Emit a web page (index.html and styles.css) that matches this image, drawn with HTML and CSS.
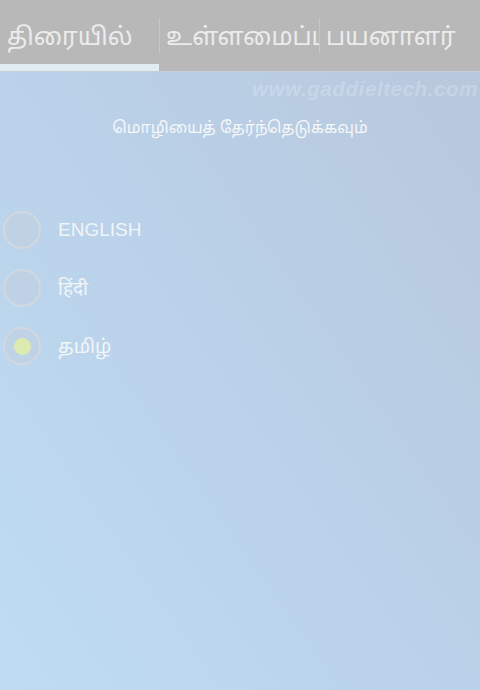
FILE: index.html
```html
<!DOCTYPE html>
<html lang="ta">
<head>
<meta charset="utf-8">
<title>மொழி</title>
<link rel="stylesheet" href="styles.css">
</head>
<body>
<div class="app">
  <nav class="tabs">
    <div class="tab active"><span class="tab-label">திரையில்</span></div>
    <div class="divider"></div>
    <div class="tab"><span class="tab-label">உள்ளமைப்பு</span></div>
    <div class="divider"></div>
    <div class="tab"><span class="tab-label">பயனாளர்</span></div>
  </nav>
  <main class="content">
    <div class="watermark">www.gaddieltech.com</div>
    <h1 class="title">மொழியைத் தேர்ந்தெடுக்கவும்</h1>
    <ul class="options">
      <li class="option"><span class="radio"></span><span class="label">ENGLISH</span></li>
      <li class="option"><span class="radio"></span><span class="label">हिंदी</span></li>
      <li class="option selected"><span class="radio"><span class="dot"></span></span><span class="label">தமிழ்</span></li>
    </ul>
  </main>
</div>
</body>
</html>
```

FILE: styles.css
```css
html, body {
  margin: 0;
  padding: 0;
}
body {
  width: 480px;
  height: 690px;
  overflow: hidden;
  font-family: "Noto Sans", "Noto Sans Tamil", "Lohit Tamil", "DejaVu Sans", sans-serif;
}
.app {
  width: 480px;
  height: 690px;
  display: flex;
  flex-direction: column;
  background: linear-gradient(to top right, #bedcf4 0%, #bad2ea 45%, #b8c7db 100%);
}
.tabs {
  display: flex;
  align-items: stretch;
  height: 71px;
  background: #b8b8b8;
  border-bottom: 1px solid #c6ced8;
  flex: none;
}
.tab {
  width: 159px;
  flex: none;
  overflow: hidden;
  white-space: nowrap;
  display: flex;
  align-items: center;
  padding: 0 6px 0 6px;
  box-sizing: border-box;
  border-bottom: 7px solid transparent;
}
.tab:last-child {
  width: 160px;
}
.tab.active {
  border-bottom-color: #e1ecf2;
  padding-left: 7px;
}
.tab-label {
  font-size: 24.5px;
  color: #ececec;
  line-height: 1.3;
  margin-top: 7px;
}
.divider {
  width: 1px;
  flex: none;
  height: 35px;
  align-self: flex-start;
  margin-top: 18px;
  background: #c6c6c6;
}
.content {
  flex: 1;
  display: flex;
  flex-direction: column;
}
.watermark {
  align-self: flex-end;
  margin: 6px 2px 0 0;
  font-family: "Liberation Sans", sans-serif;
  font-weight: bold;
  font-style: italic;
  font-size: 20.5px;
  letter-spacing: 0.6px;
  line-height: 22px;
  color: rgba(255, 255, 255, 0.22);
}
.title {
  margin: 15px 0 0;
  text-align: center;
  font-size: 16px;
  font-weight: normal;
  line-height: 24px;
  color: #f5f7f9;
}
.options {
  list-style: none;
  margin: 72px 0 0;
  padding: 0 0 0 3px;
  display: flex;
  flex-direction: column;
  gap: 20px;
}
.option {
  display: flex;
  align-items: center;
  height: 38px;
}
.radio {
  width: 34px;
  height: 34px;
  border: 2px solid #d2d8de;
  border-radius: 50%;
  background: rgba(200, 206, 214, 0.35);
  display: flex;
  align-items: center;
  justify-content: center;
  flex: none;
}
.dot {
  width: 17px;
  height: 17px;
  border-radius: 50%;
  background: #dcebb0;
}
.label {
  margin-left: 17px;
  font-size: 19px;
  color: #f2f5f8;
  line-height: 1.3;
}
.option:first-child .label {
  font-family: "Liberation Sans", sans-serif;
}
```
